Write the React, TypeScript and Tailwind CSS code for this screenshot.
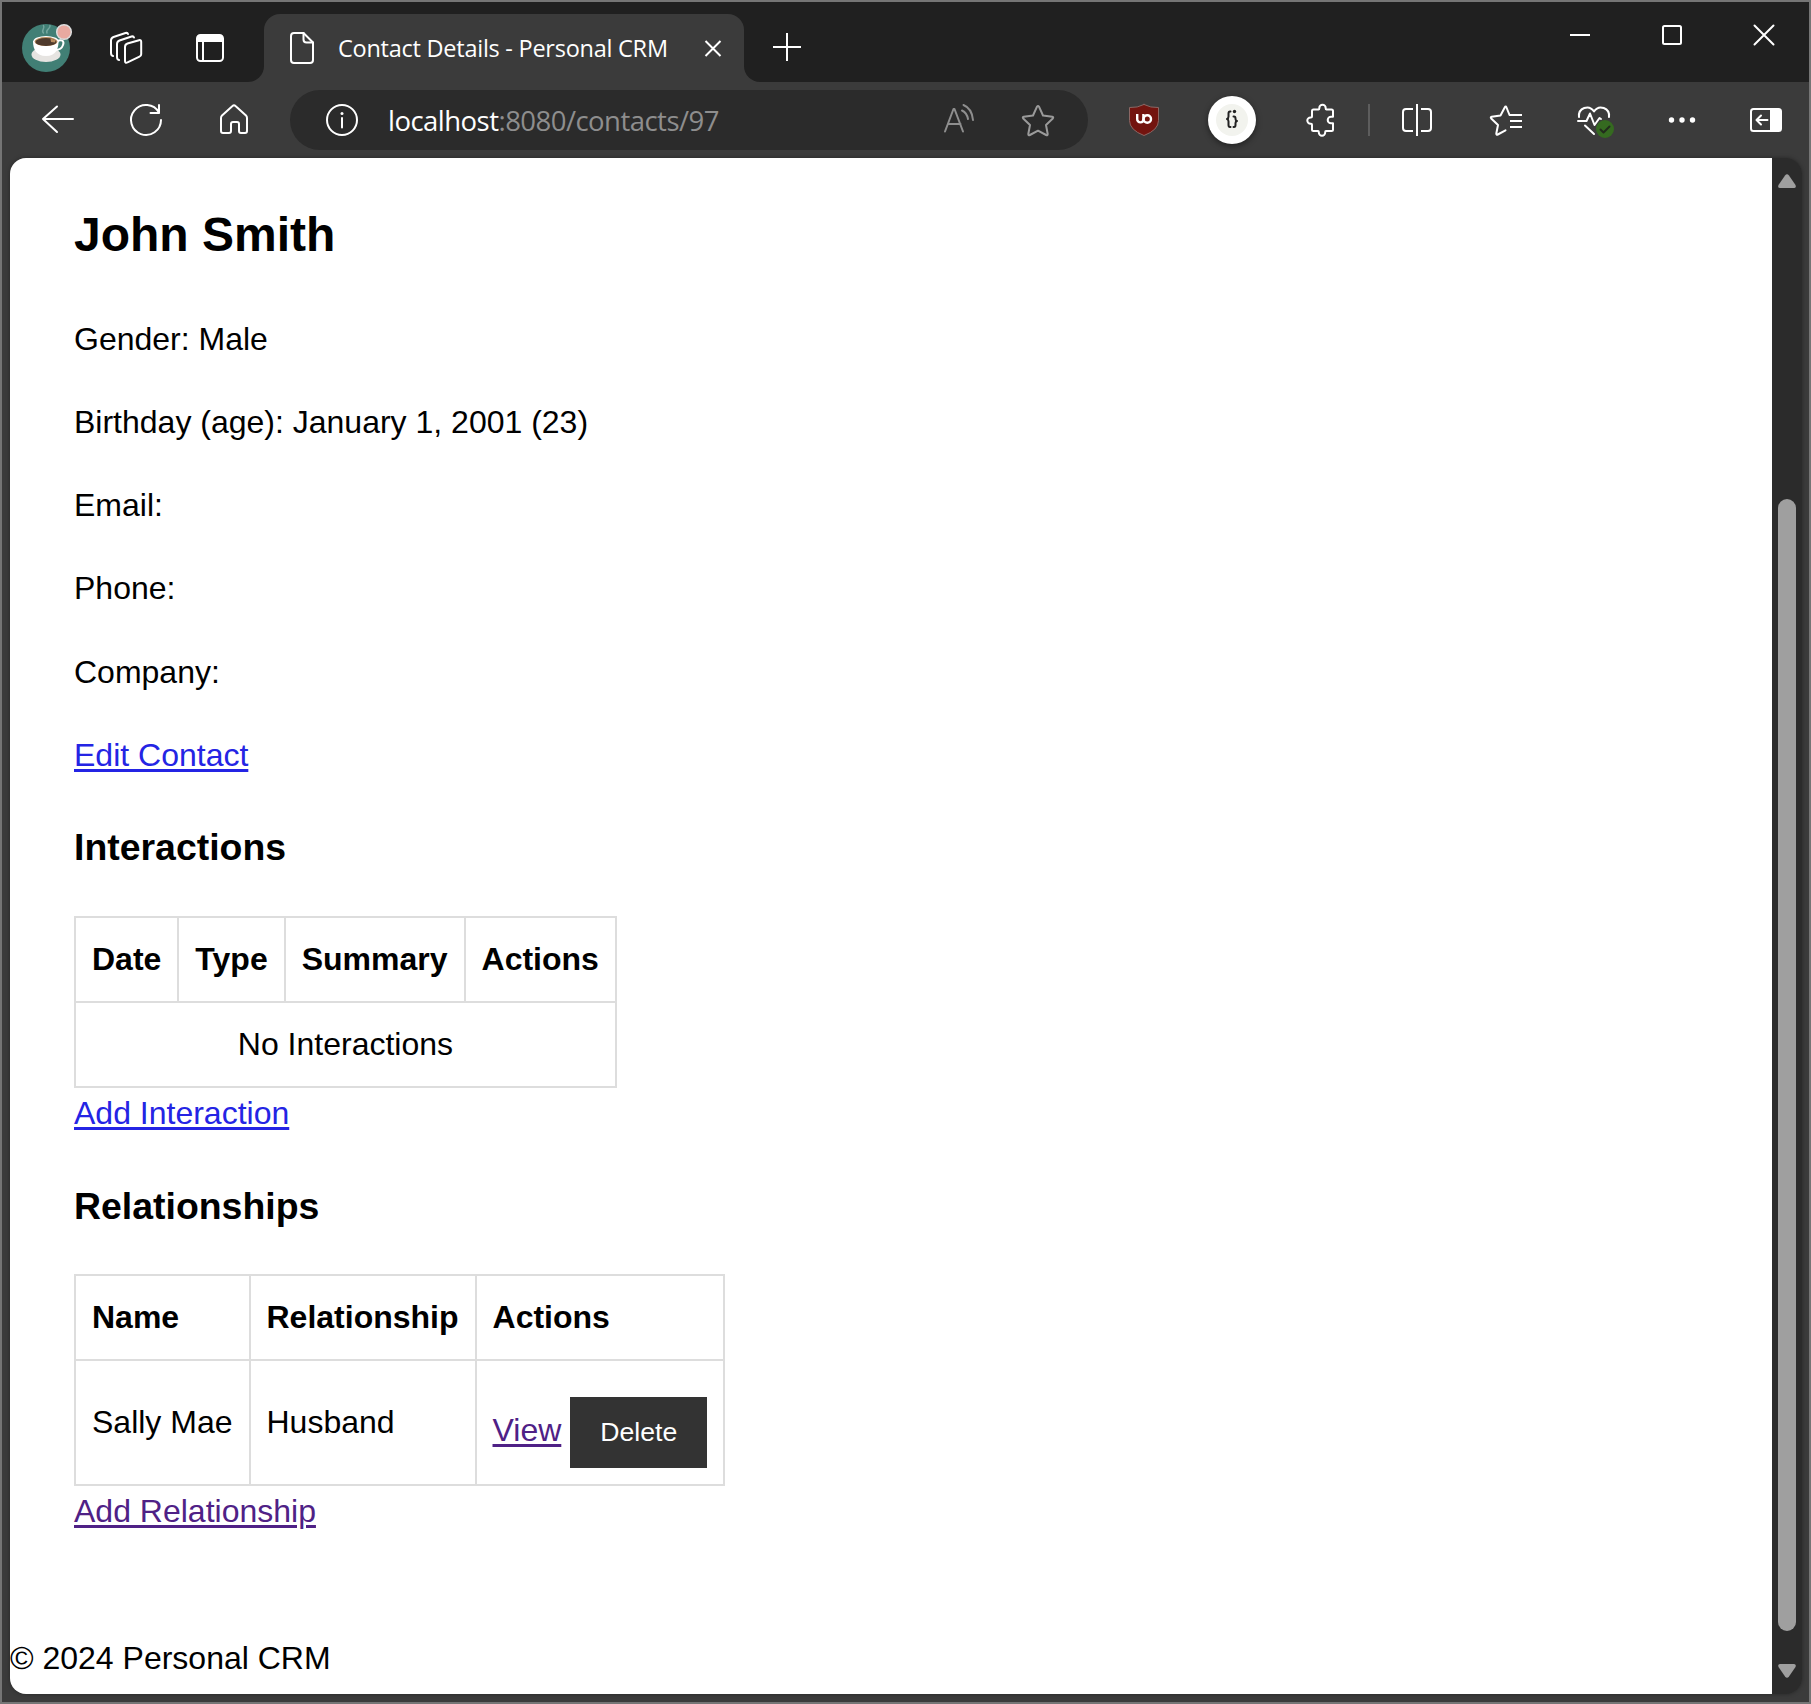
import React from "react";

type IconProps = {
  x: number;
  y?: number;
  w?: number;
  h?: number;
  className?: string;
  children: React.ReactNode;
};

/* Icons share one drawing grid; x and y select the part of the grid that is shown. */
function Icon({ x, y = 102, w = 36, h = 36, className = "", children }: IconProps) {
  return (
    <svg
      width={w}
      height={h}
      viewBox={`${x} ${y} ${w} ${h}`}
      fill="none"
      stroke="white"
      strokeWidth={2}
      strokeLinecap="round"
      strokeLinejoin="round"
      className={`block shrink-0 overflow-visible ${className}`}
    >
      {children}
    </svg>
  );
}

function TitleBar() {
  return (
    <div className="flex h-20 shrink-0 items-stretch bg-[#202020]">
      <div className="flex items-center pt-3 pl-5">
        <Icon x={22} y={23} w={50} h={50}>
          <circle cx="46" cy="48" r="24" fill="#417f75" stroke="none" />
          <path d="M43.5 33c-3-3 2-4 0-7.5M47 33c-2-3 4-4.500 3-7.500" stroke="#74a69e" strokeWidth="1.500" />
          <ellipse cx="46" cy="54.500" rx="14.500" ry="7.500" fill="#e6e4e1" stroke="none" />
          <path d="M57 41c5-2 7.500 0 6 4-1 3-4 5-7.500 5" stroke="#fff" strokeWidth="2" />
          <path d="M33 41c0 8 3 15 13 15s12.500-7 12.500-15z" fill="#fff" stroke="none" />
          <ellipse cx="46" cy="41.500" rx="12.700" ry="5.500" fill="#fff" stroke="none" />
          <ellipse cx="46" cy="41.600" rx="11.500" ry="4.500" fill="#b98d5f" stroke="none" />
          <ellipse cx="46" cy="42" rx="10.500" ry="3.900" fill="#4f3a2c" stroke="none" />
          <path d="M50.500 38.500l5 1.500-.5 2.500-4-.5z" fill="#b98d5f" stroke="none" />
          <circle cx="64" cy="32" r="7.300" fill="#e8a9a0" stroke="#dddddd" strokeWidth="1.500" />
        </Icon>
        <Icon x={108} y={30} className="ml-9">
          <path d="M127.500 43.500l11.500-3.300q2.200-.5 2.200 1.600v12.500q0 1.700-1.700 2.300l-12 5.800q-2.500 1-2.500-1.500V47q0-2.700 2.500-3.500z" />
          <path d="M119 60c-2-.3-2-1.500-2-3V44q0-2.500 2.500-3.500l12-4q2-.5 2.500 1" />
          <path d="M113 56c-2-.3-2-1.500-2-3V40.500q0-2.500 2.500-3.500l12-4q2-.5 2.500 1" />
        </Icon>
        <Icon x={192} y={30} className="ml-12">
          <rect x="197" y="35" width="26" height="26" rx="3.500" />
          <path d="M197 41v-2.500q0-3.500 3.500-3.500h19q3.500 0 3.500 3.500V41z" fill="white" stroke="none" />
          <path d="M197 41h26M203 41v20" strokeLinecap="butt" />
        </Icon>
      </div>
      <div className="ml-5 flex w-4 items-end bg-[#3b3b3b]">
        <div className="h-full w-4 rounded-br-2xl bg-[#202020]" />
      </div>
      <div className="flex w-[480px] pt-3">
        <div className="flex w-full items-center rounded-t-2xl bg-[#3b3b3b] pl-6">
          <Icon x={288} y={30} w={28}>
            <path d="M294 33h9.500l9.500 9.500V60q0 3-3 3h-16q-3 0-3-3V36q0-3 3-3z" />
            <path d="M303.500 33v6.500q0 3 3 3h6.500" />
          </Icon>
          <span className="ml-[22px] w-[331px] whitespace-nowrap font-['Open_Sans'] text-[23.500px] leading-8 tracking-[-0.25px] text-white">
            Contact Details - Personal CRM
          </span>
          <Icon x={703} y={38} w={20} h={20} className="ml-[34px]">
            <path d="M705.500 41l15 15M720.500 41l-15 15" strokeLinecap="butt" />
          </Icon>
        </div>
      </div>
      <div className="w-4 bg-[#3b3b3b]">
        <div className="h-full w-4 rounded-bl-2xl bg-[#202020]" />
      </div>
      <div className="ml-[11px] flex items-center pt-[10px]">
        <Icon x={771} y={31} w={32} h={32}>
          <path d="M773 47h28M787 33v28" strokeLinecap="butt" />
        </Icon>
      </div>
      <div className="mr-[33px] ml-auto flex h-[66px] items-center gap-[68px]">
        <Icon x={1568} y={23} w={24} h={24}>
          <path d="M1570 35h20" strokeLinecap="butt" />
        </Icon>
        <Icon x={1660} y={23} w={24} h={24}>
          <rect x="1663" y="26" width="18" height="18" rx="1.500" />
        </Icon>
        <Icon x={1752} y={23} w={24} h={24}>
          <path d="M1754.500 25.500l19 19M1773.500 25.500l-19 19" />
        </Icon>
      </div>
    </div>
  );
}

function Toolbar() {
  return (
    <div className="flex h-[76px] shrink-0 items-center bg-[#3b3b3b] pl-[38px]">
      <Icon x={40}>
        <path d="M57 106.500L43 119l14 13M43 119h30" />
      </Icon>
      <Icon x={128} className="ml-[52px]">
        <path d="M159 112.500A15 15 0 1 0 161 120" />
        <path d="M159 105v8h-8.500" />
      </Icon>
      <Icon x={216} className="ml-[52px]">
        <path d="M221 118q0-1.500 1-2.500l10.500-9.500q1.500-1.500 3 0l10.500 9.500q1 1 1 2.500v13q0 2-2 2h-4q-2 0-2-2v-7q0-2-2-2h-4q-2 0-2 2v7q0 2-2 2h-6q-2 0-2-2z" />
      </Icon>
      <div className="ml-[38px] flex h-[60px] w-[798px] items-center rounded-full bg-[#2b2b2b] pl-[34px]">
        <Icon x={324}>
          <circle cx="342" cy="120" r="15" />
          <path d="M342 118v9.500" />
          <circle cx="342" cy="113.500" r="1.500" fill="white" stroke="none" />
        </Icon>
        <div className="ml-7 w-[554px] pt-px whitespace-nowrap font-['Open_Sans'] text-[27.500px] leading-10 tracking-[-0.53px] text-[#8e8e8e]">
          <span className="text-white">localhost</span>:8080/contacts/97
        </div>
        <Icon x={942} className="stroke-[#8e8e8e]">
          <path d="M945 131.500l8.500-22.500h1l8.500 22.500M948 124h12.500M962 110.500q5 2.500 6 8.500M963.500 105q8.500 3.500 9.500 15" />
        </Icon>
        <Icon x={1020} className="ml-[42px] stroke-[#9a9a9a]">
          <path d="M1037 106.700q1-1.500 2 0l4 8.800 9.300 1.200q1.500.4.500 1.800l-6.800 6.500 1.700 9q0 1.600-1.600 1l-8.100-4.300-8.100 4.300q-1.600.6-1.600-1l1.700-9-6.800-6.500q-1-1.400.5-1.800l9.300-1.200z" />
        </Icon>
      </div>
      <Icon x={1126} className="ml-[38px]">
        <path
          d="M1144 104.500q6.500 3.500 14.500 3v13q0 9.500-14.500 15-14.500-5.500-14.500-15v-13q8 .5 14.500-3z"
          fill="#73140f"
          stroke="#8b6764"
          strokeWidth="1"
        />
        <path d="M1137.200 114v5a3.200 3.200 0 0 0 3.200 3.400q3 0 3-3.400v-5" strokeWidth="2.400" strokeLinecap="butt" />
        <circle cx="1147.300" cy="119" r="3.700" strokeWidth="2.400" />
      </Icon>
      <div className="ml-[46px] flex size-12 items-center justify-center rounded-full bg-white shadow-[0_2px_6px_rgba(0,0,0,0.45)]">
        <div className="flex size-8 items-center justify-center rounded-full bg-[#f2f3ee]">
          <Icon x={1224} y={110} w={16} h={20} className="stroke-[#222]">
            <path d="M1230.500 111.500h-.5q-1.500 0-1.500 2v3q0 2-1.500 2.500 1.500.5 1.500 2.500v3.500q0 2 1.500 2h.5M1233.500 116.500h.5q1.500 0 1.500 2v.5q0 1.500 1.500 2-1.500.5-1.500 2v2q0 2-1.500 2h-.5" />
            <circle cx="1234.500" cy="111.500" r="1.700" fill="#222" stroke="none" />
          </Icon>
        </div>
      </div>
      <Icon x={1302} className="ml-[46px]">
        <path d="M1313.500 109.500h5q.8 0 .8-1v-.5a3.200 3.200 0 0 1 6.400 0v.5q0 1 .8 1h5q1.500 0 1.500 1.500v5.700h-2a3.300 3.300 0 0 0 0 6.600h2v6.200q0 1.500-1.500 1.500h-5.500q-.8 0-.8 1v.6a3.200 3.200 0 0 1-6.400 0v-.6q0-1-.8-1h-4.500q-1.500 0-1.500-1.500v-4.700q0-1-1-1h-.5a3.200 3.200 0 0 1 0-6.400h.5q1 0 1-1V111q0-1.500 1.500-1.500z" />
      </Icon>
      <div className="ml-[30px] h-8 w-0.5 bg-[#5d5d5d]" />
      <Icon x={1399} className="ml-[29px]">
        <path d="M1413 109h-7q-3 0-3 3v16q0 3 3 3h7M1421 109h7q3 0 3 3v16q0 3-3 3h-7M1417 104v32" strokeLinecap="butt" />
      </Icon>
      <Icon x={1488} className="ml-[53px]">
        <path d="M1509.500 115l-3-7.500q-.8-1.800-1.800 0l-4.200 8-8.800 1.200q-1.500.4-.5 1.800l6.800 6.500-1.700 8.500q0 1.600 1.500 1l7.700-4.200" />
        <path d="M1509.500 115h12.500M1510 121h12M1510 127h12" strokeLinecap="butt" />
      </Icon>
      <Icon x={1576} w={40} className="ml-[52px]">
        <path d="M1579 117c-1-9 10-13 15-5.500 5-7.500 16-3.500 15 5.500" />
        <path d="M1578 121h8.500l3.500-7.500 4.500 11.500 5-7 1.500 1M1585 125.500l9 8.500" />
        <circle cx="1605" cy="129" r="9" fill="#356a20" stroke="none" />
        <path d="M1600.500 129.500l3 3 6-6" stroke="#222c1d" />
      </Icon>
      <Icon x={1664} className="ml-[48px]">
        <g fill="white" stroke="none">
          <circle cx="1671.500" cy="120" r="2.700" />
          <circle cx="1682" cy="120" r="2.700" />
          <circle cx="1692.500" cy="120" r="2.700" />
        </g>
      </Icon>
      <Icon x={1748} className="ml-[48px]">
        <rect x="1751" y="109" width="30" height="22" rx="2.500" />
        <path d="M1770 109h8.500q2.500 0 2.500 2.500v17q0 2.500-2.500 2.500h-8.500z" fill="white" stroke="none" />
        <path d="M1761 115.500l-4.500 4.500 4.500 4.500M1757 120h10.500" />
      </Icon>
    </div>
  );
}

const details = ["Gender: Male", "Birthday (age): January 1, 2001 (23)", "Email:", "Phone:", "Company:"];

const linkBase = "underline decoration-[3px] underline-offset-[3px]";
const cell = "border-2 border-[#dddddd] p-4";

function ContactPage() {
  return (
    <div className="flex flex-1 flex-col bg-white font-['Liberation_Sans',sans-serif] text-[32px] leading-[51.2px] text-black">
      <main className="px-16 pt-[39px]">
        <h2 className="mb-10 text-[48px] leading-[76.8px] font-bold">John Smith</h2>
        {details.map((d) => (
          <p key={d} className="mb-8">
            {d}
          </p>
        ))}
        <a className={`${linkBase} text-[#2424e4]`}>Edit Contact</a>

        <h3 className="my-[37.44px] text-[37.44px] leading-[59.9px] font-bold">Interactions</h3>
        <table className="border-collapse">
          <thead>
            <tr>
              {["Date", "Type", "Summary", "Actions"].map((h) => (
                <th key={h} className={`${cell} text-left font-bold`}>
                  {h}
                </th>
              ))}
            </tr>
          </thead>
          <tbody>
            <tr>
              <td colSpan={4} className={`${cell} text-center`}>
                No Interactions
              </td>
            </tr>
          </tbody>
        </table>
        <a className={`${linkBase} text-[#2424e4]`}>Add Interaction</a>

        <h3 className="my-[37.44px] text-[37.44px] leading-[59.9px] font-bold">Relationships</h3>
        <table className="border-collapse">
          <thead>
            <tr>
              {["Name", "Relationship", "Actions"].map((h) => (
                <th key={h} className={`${cell} text-left font-bold`}>
                  {h}
                </th>
              ))}
            </tr>
          </thead>
          <tbody>
            <tr>
              <td className={cell}>Sally Mae</td>
              <td className={cell}>Husband</td>
              <td className={cell}>
                <a className={`${linkBase} text-[#4f2186]`}>View</a>{" "}
                <button className="mt-5 bg-[#333333] px-[30px] py-5 align-baseline text-[26.667px] leading-[31px] text-white">
                  Delete
                </button>
              </td>
            </tr>
          </tbody>
        </table>
        <a className={`${linkBase} text-[#4f2186]`}>Add Relationship</a>
      </main>
      <footer className="mt-auto mb-[9.400px]">© 2024 Personal CRM</footer>
    </div>
  );
}

function ScrollBar() {
  return (
    <div className="flex w-[30px] flex-col items-center bg-[#2b2b2b] pt-4 pb-4">
      <svg width="18" height="14" viewBox="0 0 18 14" className="block fill-[#9f9f9f]">
        <path d="M7 1.500q2-2.500 4 0l6.500 9.500q1 3-1.500 3H2q-2.500 0-1.500-3z" />
      </svg>
      <div className="mt-[311px] w-[18px] flex-1 rounded-full bg-[#9f9f9f]" />
      <svg width="18" height="14" viewBox="0 0 18 14" className="mt-[33px] block fill-[#9f9f9f]">
        <path d="M7 12.500q2 2.500 4 0l6.500-9.500q1-3-1.500-3H2q-2.500 0-1.500 3z" />
      </svg>
    </div>
  );
}

export default function App() {
  return (
    <div className="flex h-[1704px] w-[1811px] flex-col overflow-hidden border-2 border-[#757575] bg-[#3b3b3b]">
      <TitleBar />
      <Toolbar />
      <div className="mr-[7px] mb-2 ml-2 flex flex-1 overflow-hidden rounded-2xl shadow-[0_0_4px_rgba(0,0,0,0.35)]">
        <ContactPage />
        <ScrollBar />
      </div>
    </div>
  );
}
